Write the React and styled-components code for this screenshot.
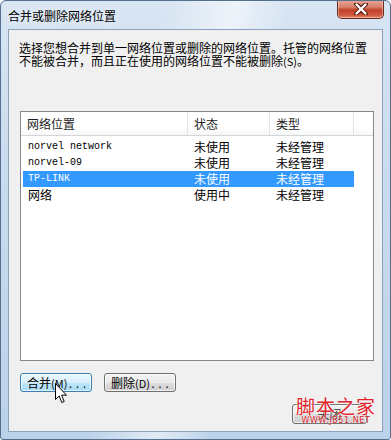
import React from "react";
import styled, { createGlobalStyle } from "styled-components";

const GlobalStyle = createGlobalStyle`
  html, body {
    margin: 0;
    padding: 0;
    background: #ffffff;
    overflow: hidden;
  }
`;

const cjk = `"Noto Sans CJK SC", "Noto Sans", sans-serif`;

const Window = styled.div`
  position: relative;
  width: 391px;
  height: 440px;
  box-sizing: border-box;
  display: flex;
  flex-direction: column;
  border: 1px solid #55708f;
  border-radius: 6px 6px 3px 3px;
  background:
    linear-gradient(100deg, rgba(255,255,255,0) 35%, rgba(255,255,255,0.55) 50%, rgba(255,255,255,0) 62%),
    linear-gradient(to bottom, #d8e5f3 0%, #c9dbee 40%, #bcd2ea 100%);
  font-family: ${cjk};
  overflow: hidden;
`;

const TitleBar = styled.div`
  height: 28px;
  display: flex;
  align-items: flex-start;
  justify-content: space-between;
  padding-left: 7px;
  flex-shrink: 0;
`;

const Title = styled.div`
  font-size: 12px;
  line-height: 12px;
  margin-top: 9px;
  color: #000;
  text-shadow: 0 0 6px rgba(255,255,255,0.9);
`;

const CloseButton = styled.div`
  width: 45px;
  height: 18px;
  margin-right: 6px;
  margin-top: -1px;
  border: 1px solid #6f2a20;
  border-top: none;
  border-radius: 0 0 5px 5px;
  background: linear-gradient(to bottom, #e9a898 0%, #d8806a 40%, #c1412b 55%, #cf5a40 85%, #e58f6f 100%);
  box-shadow: inset 0 0 0 1px rgba(255,255,255,0.35);
  display: flex;
  align-items: center;
  justify-content: center;
`;

const Client = styled.div`
  flex: 1;
  margin: 0 7px 7px 7px;
  border: 1px solid #8ba1bd;
  background: #f0f0f0;
  display: flex;
  flex-direction: column;
  padding: 11px 9px 0 10px;
  box-sizing: border-box;
  position: relative;
`;

const Description = styled.div`
  font-size: 12px;
  line-height: 13px;
  color: #000;
  white-space: nowrap;
  height: 70px;
`;

const ListBox = styled.div`
  margin-left: 1px;
  width: 354px;
  height: 250px;
  box-sizing: border-box;
  border: 1px solid #828790;
  background: #fff;
  display: flex;
  flex-direction: column;
`;

const HeaderRow = styled.div`
  height: 23px;
  display: grid;
  grid-template-columns: 167px 82px 84px 1fr;
  background: linear-gradient(to bottom, #ffffff 0%, #ffffff 60%, #f6f7f8 100%);
  border-bottom: 1px solid #d5d5d5;
`;

const HeaderCell = styled.div`
  font-size: 12px;
  line-height: 23px;
  padding-left: 6px;
  color: #1e1e1e;
  border-right: ${(p) => (p.$last ? "none" : "1px solid #e3e5e8")};
`;

const Rows = styled.div`
  padding: 3px 0 0 2px;
  display: flex;
  flex-direction: column;
`;

const Row = styled.div`
  width: 331px;
  height: 16px;
  display: grid;
  grid-template-columns: 165px 82px 84px;
  background: ${(p) => (p.$selected ? "#3399ff" : "transparent")};
  color: ${(p) => (p.$selected ? "#ffffff" : "#000000")};
`;

const Cell = styled.div`
  font-size: 12px;
  line-height: 16px;
  padding-left: ${(p) => (p.$first ? "5px" : "6px")};
  white-space: nowrap;
`;

const MonoCell = styled(Cell)`
  font-family: "Liberation Mono", monospace;
  font-size: 10px;
`;

const ButtonRow = styled.div`
  display: flex;
  gap: 12px;
  margin-top: 12px;
  margin-left: 1px;
`;

const Button = styled.div`
  width: 72px;
  height: 19px;
  box-sizing: border-box;
  border-radius: 3px;
  border: 1px solid ${(p) => (p.$hover ? "#3c7fb1" : "#707070")};
  background: ${(p) =>
    p.$hover
      ? "linear-gradient(to bottom, #eaf6fd 0%, #d9f0fc 50%, #bee6fd 51%, #a7d9f5 100%)"
      : "linear-gradient(to bottom, #f2f2f2 0%, #ebebeb 50%, #dddddd 51%, #cfcfcf 100%)"};
  box-shadow: inset 0 0 0 1px rgba(255,255,255,0.7);
  font-size: 12px;
  line-height: 17px;
  padding-left: 6px;
  color: #000;
  white-space: nowrap;
`;

const Dots = styled.span`
  font-family: "Liberation Mono", monospace;
  font-size: 10px;
  letter-spacing: 1px;
`;

const Paren = styled.span`
  font-size: 11px;
`;

const FooterRow = styled.div`
  display: flex;
  justify-content: flex-end;
  margin-top: 12px;
  margin-right: 6px;
`;

const CloseBtn = styled(Button)`
  width: 75px;
  height: 20px;
  text-align: center;
  padding-left: 0;
  color: #333;
`;

const Watermark = styled.div`
  position: absolute;
  right: 6px;
  bottom: 5px;
  display: flex;
  flex-direction: column;
  align-items: center;
  pointer-events: none;
`;

const WatermarkTitle = styled.div`
  font-family: ${cjk};
  font-size: 19px;
  line-height: 21px;
  color: #e2232a;
  letter-spacing: 1px;
  text-shadow: 0 0 2px #fff, 0 0 2px #fff;
`;

const WatermarkUrl = styled.div`
  font-family: "DejaVu Sans", sans-serif;
  font-size: 8px;
  line-height: 10px;
  color: #d9232a;
  letter-spacing: 0.6px;
  text-shadow: 0 0 1px #fff;
`;

const Cursor = styled.svg`
  position: absolute;
  left: 46px;
  top: 353px;
`;

const rows = [
  { name: "norvel network", mono: true, status: "未使用", type: "未经管理" },
  { name: "norvel-09", mono: true, status: "未使用", type: "未经管理" },
  { name: "TP-LINK", mono: true, status: "未使用", type: "未经管理", selected: true },
  { name: "网络", mono: false, status: "使用中", type: "未经管理" },
];

export default function App() {
  return (
    <>
      <GlobalStyle />
      <Window>
        <TitleBar>
          <Title>合并或删除网络位置</Title>
          <CloseButton>
            <svg width="14" height="12" viewBox="0 0 14 12">
              <path
                d="M2 1 L7 5 L12 1 M2 11 L7 7 L12 11 M2 1 L12 11 M12 1 L2 11"
                stroke="#5a1a12"
                strokeWidth="4"
                strokeLinecap="round"
                fill="none"
              />
              <path
                d="M2.5 1.5 L11.5 10.5 M11.5 1.5 L2.5 10.5"
                stroke="#ffffff"
                strokeWidth="2.4"
                strokeLinecap="round"
                fill="none"
              />
            </svg>
          </CloseButton>
        </TitleBar>
        <Client>
          <Description>
            选择您想合并到单一网络位置或删除的网络位置。托管的网络位置
            <br />
            不能被合并，而且正在使用的网络位置不能被删除<Paren>(S)</Paren>。
          </Description>
          <ListBox>
            <HeaderRow>
              <HeaderCell>网络位置</HeaderCell>
              <HeaderCell>状态</HeaderCell>
              <HeaderCell>类型</HeaderCell>
              <HeaderCell $last />
            </HeaderRow>
            <Rows>
              {rows.map((r) => (
                <Row key={r.name} $selected={r.selected}>
                  {r.mono ? (
                    <MonoCell $first>{r.name}</MonoCell>
                  ) : (
                    <Cell $first>{r.name}</Cell>
                  )}
                  <Cell>{r.status}</Cell>
                  <Cell>{r.type}</Cell>
                </Row>
              ))}
            </Rows>
          </ListBox>
          <ButtonRow>
            <Button $hover>
              合并<Paren>(M)</Paren>
              <Dots>...</Dots>
            </Button>
            <Button>
              删除<Paren>(D)</Paren>
              <Dots>...</Dots>
            </Button>
          </ButtonRow>
          <FooterRow>
            <CloseBtn>关闭</CloseBtn>
          </FooterRow>
          <Watermark>
            <WatermarkTitle>脚本之家</WatermarkTitle>
            <WatermarkUrl>WWW.JB51.NET</WatermarkUrl>
          </Watermark>
          <Cursor width="13" height="21" viewBox="0 0 13 21">
            <path
              d="M0.5 0.5 L0.5 16.5 L4.2 13 L6.8 19.5 L9.2 18.5 L6.6 12.2 L11.5 12.2 Z"
              fill="#ffffff"
              stroke="#000000"
              strokeWidth="1"
              strokeLinejoin="miter"
            />
          </Cursor>
        </Client>
      </Window>
    </>
  );
}
